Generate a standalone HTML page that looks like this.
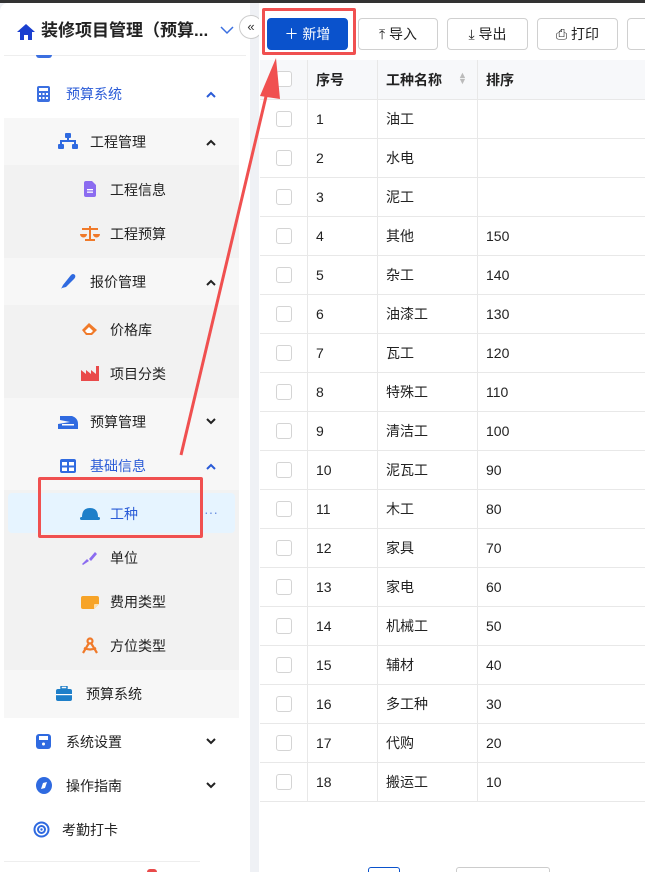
<!DOCTYPE html>
<html><head><meta charset="utf-8"><style>
*{margin:0;padding:0;box-sizing:border-box}
html,body{width:645px;height:872px;overflow:hidden}
body{background:#eff1f5;font-family:"Liberation Sans","Noto Sans CJK SC",sans-serif;font-size:14px;color:#222;position:relative}
.a{position:absolute}
.side{left:0;top:3px;width:250px;height:869px;background:#fff;border-top-left-radius:8px}
.t{position:absolute;font-size:14px;color:#222;white-space:nowrap;line-height:18px}
.chev{position:absolute}
.main{left:259px;top:3px;width:386px;height:869px;background:#fff}
.btn{position:absolute;top:18px;height:32px;border:1px solid #d0d0d0;border-radius:4px;background:#fff;font-size:14px;line-height:30px;text-align:center;color:#222}
.row{position:absolute;left:260px;width:385px;height:39px;border-bottom:1px solid #e8e8e8;font-size:14px}
.row span{position:absolute;top:0;line-height:38px}
.cb{position:absolute;left:16px;top:11px;width:16px;height:16px;border:1px solid #d4d4d4;border-radius:3px;background:#fff}
.vl{position:absolute;top:60px;height:741px;width:1px;background:#e8e8e8}
</style></head><body>
<div class="a" style="left:0;top:0;width:645px;height:3px;background:#333"></div>
<div class="a side"></div>
<svg class="a" style="left:16px;top:23px" width="20" height="18" viewBox="0 0 20 18"><path d="M10 1L1 9h3v8h4v-5h4v5h4V9h3z" fill="#1a3fcf"/></svg>
<div class="t" style="left:41px;top:22px;font-size:17px;font-weight:bold;color:#222">装修项目管理（预算...</div>
<svg class="a" style="left:220px;top:26px" width="14" height="9"><path d="M1 1L7 7 13 1" stroke="#3b6fe0" stroke-width="1.5" fill="none"/></svg>
<div class="a" style="left:239px;top:15px;width:24px;height:24px;border:1px solid #ccc;border-radius:12px;background:#fff;font-size:13px;line-height:21px;text-align:center;color:#333">«</div>
<div class="a" style="left:4px;top:55px;width:242px;height:1px;background:#eee"></div>
<div class="a" style="left:36px;top:55px;width:16px;height:3px;background:#3b6fe0;border-radius:0 0 3px 3px"></div>
<svg class="a" style="left:37px;top:86px" width="13" height="16"><rect x="0" y="0" width="13" height="16" rx="2" fill="#3b6fe0"/><rect x="2" y="2" width="9" height="3" fill="#fff"/><g fill="#fff"><rect x="2" y="7" width="2" height="2"/><rect x="5.5" y="7" width="2" height="2"/><rect x="9" y="7" width="2" height="2"/><rect x="2" y="11" width="2" height="2"/><rect x="5.5" y="11" width="2" height="2"/><rect x="9" y="11" width="2" height="2"/></g></svg>
<div class="t" style="left:66px;top:85px;color:#2a5bd7">预算系统</div>
<svg class="chev" style="left:206px;top:91px" width="10" height="7"><path d="M1 6L5 2 9 6" stroke="#2a5bd7" stroke-width="2" fill="none"/></svg>
<div class="a" style="left:4px;top:118px;width:235px;height:600px;background:#f7f7f7"></div>
<div class="a" style="left:4px;top:165px;width:235px;height:93px;background:#f2f2f2"></div>
<div class="a" style="left:4px;top:305px;width:235px;height:93px;background:#f2f2f2"></div>
<div class="a" style="left:4px;top:490px;width:235px;height:180px;background:#f2f2f2"></div>
<svg class="a" style="left:58px;top:133px" width="20" height="17"><g fill="#2f6ae0"><rect x="7" y="0" width="6" height="5" rx="1"/><rect x="9" y="5" width="2" height="3"/><rect x="2" y="7" width="16" height="2"/><rect x="2" y="8" width="2" height="3"/><rect x="16" y="8" width="2" height="3"/><rect x="0" y="11" width="6" height="5" rx="1"/><rect x="14" y="11" width="6" height="5" rx="1"/></g></svg>
<div class="t" style="left:90px;top:133px">工程管理</div>
<svg class="chev" style="left:206px;top:139px" width="10" height="7"><path d="M1 6L5 2 9 6" stroke="#222" stroke-width="2" fill="none"/></svg>
<svg class="a" style="left:84px;top:181px" width="12" height="16"><path d="M0 2Q0 0 2 0H8L12 4V14Q12 16 10 16H2Q0 16 0 14Z" fill="#8b6cf0"/><g fill="#fff"><rect x="3" y="8" width="6" height="1.3"/><rect x="3" y="10.5" width="6" height="1.3"/></g></svg>
<div class="t" style="left:110px;top:181px">工程信息</div>
<svg class="a" style="left:80px;top:225px" width="20" height="16"><g fill="#f07a2a"><rect x="9" y="1" width="2" height="13"/><rect x="2" y="3" width="16" height="2"/><path d="M0 9h7a3.5 3.5 0 0 1-7 0zM13 9h7a3.5 3.5 0 0 1-7 0z"/><rect x="5" y="14" width="10" height="2"/></g></svg>
<div class="t" style="left:110px;top:225px">工程预算</div>
<svg class="a" style="left:60px;top:273px" width="16" height="17"><path d="M2 15L1 16 3 12 11 2Q13 0 15 2 16 4 14 6L6 14Z" fill="#2f6ae0"/></svg>
<div class="t" style="left:90px;top:273px">报价管理</div>
<svg class="chev" style="left:206px;top:279px" width="10" height="7"><path d="M1 6L5 2 9 6" stroke="#222" stroke-width="2" fill="none"/></svg>
<svg class="a" style="left:81px;top:321px" width="18" height="15"><path d="M1 9L8 2 16 9 11 14H5Z" fill="#f07a2a"/><path d="M4 10L8 6 12 10 10 12H6Z" fill="#fff"/></svg>
<div class="t" style="left:110px;top:321px">价格库</div>
<svg class="a" style="left:81px;top:366px" width="18" height="15"><path d="M0 4l5 4V4l5 4V4l5 4V0h3v15H0Z" fill="#e94a4a"/></svg>
<div class="t" style="left:110px;top:365px">项目分类</div>
<svg class="a" style="left:58px;top:416px" width="20" height="13"><path d="M2 0H14Q20 2 20 8V13H0V8L12 6 2 4Z" fill="#2f6ae0"/><rect x="4" y="8" width="12" height="1.5" fill="#fff"/></svg>
<div class="t" style="left:90px;top:413px">预算管理</div>
<svg class="chev" style="left:206px;top:418px" width="10" height="7"><path d="M1 1L5 5 9 1" stroke="#222" stroke-width="2" fill="none"/></svg>
<svg class="a" style="left:60px;top:459px" width="16" height="14"><rect width="16" height="14" rx="2" fill="#2f6ae0"/><g fill="#fff"><rect x="2" y="3" width="5" height="3.5"/><rect x="9" y="3" width="5" height="3.5"/><rect x="2" y="8.5" width="5" height="3.5"/><rect x="9" y="8.5" width="5" height="3.5"/></g></svg>
<div class="t" style="left:90px;top:457px;color:#2a5bd7">基础信息</div>
<svg class="chev" style="left:206px;top:463px" width="10" height="7"><path d="M1 6L5 2 9 6" stroke="#2a5bd7" stroke-width="2" fill="none"/></svg>
<div class="a" style="left:8px;top:493px;width:227px;height:40px;background:#e6f4ff;border-radius:4px"></div>
<svg class="a" style="left:80px;top:507px" width="20" height="14"><path d="M2 10Q2 1 10 1 18 1 18 10Z" fill="#1e7fc9"/><rect x="0" y="10" width="20" height="3" rx="1.5" fill="#1e7fc9"/></svg>
<div class="t" style="left:110px;top:505px;color:#2a5bd7">工种</div>
<div class="t" style="left:204px;top:503px;color:#6a8fe0">···</div>
<svg class="a" style="left:82px;top:550px" width="16" height="16"><path d="M1 15L0 14 5 9 7 11ZM7 9L13 2 15 4 9 11Z" fill="#8b6cf0"/></svg>
<div class="t" style="left:110px;top:549px">单位</div>
<svg class="a" style="left:81px;top:596px" width="18" height="13"><path d="M0 2Q0 0 2 0H16Q18 0 18 2V8L13 13H2Q0 13 0 11Z" fill="#f7a428"/><path d="M13 13V9Q13 8 14 8H18Z" fill="#fde1b0"/></svg>
<div class="t" style="left:110px;top:593px">费用类型</div>
<svg class="a" style="left:81px;top:637px" width="18" height="17"><g stroke="#f07a2a" stroke-width="2.2" fill="none"><circle cx="9" cy="4" r="2.5"/><path d="M8 6L2 16M10 6L16 16M3 11Q9 14 15 11"/></g></svg>
<div class="t" style="left:110px;top:637px">方位类型</div>
<svg class="a" style="left:56px;top:686px" width="16" height="15"><rect x="5" y="0" width="6" height="3" rx="1" fill="none" stroke="#1e7fc9" stroke-width="1.5"/><rect x="0" y="3" width="16" height="12" rx="2" fill="#1e7fc9"/><rect x="0" y="8" width="16" height="1.2" fill="#fff"/></svg>
<div class="t" style="left:86px;top:685px">预算系统</div>
<svg class="a" style="left:36px;top:734px" width="15" height="15"><rect width="15" height="15" rx="3" fill="#2f6ae0"/><rect x="3" y="2" width="9" height="4" fill="#fff"/><circle cx="7.5" cy="10" r="1.5" fill="#fff"/></svg>
<div class="t" style="left:66px;top:733px">系统设置</div>
<svg class="chev" style="left:206px;top:738px" width="10" height="7"><path d="M1 1L5 5 9 1" stroke="#222" stroke-width="2" fill="none"/></svg>
<svg class="a" style="left:36px;top:777px" width="16" height="17"><ellipse cx="8" cy="8.5" rx="8" ry="8.5" fill="#2f6ae0"/><path d="M5 12L7 6 11 5 9 11Z" fill="#fff"/></svg>
<div class="t" style="left:66px;top:777px">操作指南</div>
<svg class="chev" style="left:206px;top:782px" width="10" height="7"><path d="M1 1L5 5 9 1" stroke="#222" stroke-width="2" fill="none"/></svg>
<svg class="a" style="left:33px;top:821px" width="17" height="17"><g fill="none" stroke="#2f6ae0" stroke-width="2"><circle cx="8.5" cy="8.5" r="7"/><circle cx="8.5" cy="8.5" r="3.5"/></g><circle cx="8.5" cy="8.5" r="1.2" fill="#2f6ae0"/></svg>
<div class="t" style="left:62px;top:821px">考勤打卡</div>
<div class="a" style="left:4px;top:861px;width:196px;height:1px;background:#eee"></div>
<div class="a" style="left:147px;top:869px;width:10px;height:3px;border-radius:5px 5px 0 0;background:#e94a4a"></div>
<div class="a main"></div>
<div class="btn" style="left:267px;width:81px;background:#0a52cc;border-color:#0a52cc;color:#fff">＋ 新增</div>
<div class="btn" style="left:358px;width:80px">⤒ 导入</div>
<div class="btn" style="left:447px;width:81px">⤓ 导出</div>
<div class="btn" style="left:537px;width:81px">⎙ 打印</div>
<div class="btn" style="left:627px;width:40px"></div>
<div class="a" style="left:260px;top:60px;width:385px;height:40px;background:#f7f8fa;border-bottom:1px solid #e8e8e8"></div>
<div class="cb" style="left:276px;top:71px;position:absolute"></div>
<div class="t" style="left:316px;top:71px;font-weight:bold">序号</div>
<div class="t" style="left:386px;top:71px;font-weight:bold">工种名称</div>
<div class="t" style="left:458px;top:72px;font-size:9px;color:#bbb;line-height:6px">▲<br>▼</div>
<div class="t" style="left:486px;top:71px;font-weight:bold">排序</div>
<div class="vl" style="left:307px"></div><div class="vl" style="left:377px"></div><div class="vl" style="left:477px"></div>
<div class="row" style="top:100px"><div class="cb"></div><span style="left:56px">1</span><span style="left:126px">油工</span></div>
<div class="row" style="top:139px"><div class="cb"></div><span style="left:56px">2</span><span style="left:126px">水电</span></div>
<div class="row" style="top:178px"><div class="cb"></div><span style="left:56px">3</span><span style="left:126px">泥工</span></div>
<div class="row" style="top:217px"><div class="cb"></div><span style="left:56px">4</span><span style="left:126px">其他</span><span style="left:226px">150</span></div>
<div class="row" style="top:256px"><div class="cb"></div><span style="left:56px">5</span><span style="left:126px">杂工</span><span style="left:226px">140</span></div>
<div class="row" style="top:295px"><div class="cb"></div><span style="left:56px">6</span><span style="left:126px">油漆工</span><span style="left:226px">130</span></div>
<div class="row" style="top:334px"><div class="cb"></div><span style="left:56px">7</span><span style="left:126px">瓦工</span><span style="left:226px">120</span></div>
<div class="row" style="top:373px"><div class="cb"></div><span style="left:56px">8</span><span style="left:126px">特殊工</span><span style="left:226px">110</span></div>
<div class="row" style="top:412px"><div class="cb"></div><span style="left:56px">9</span><span style="left:126px">清洁工</span><span style="left:226px">100</span></div>
<div class="row" style="top:451px"><div class="cb"></div><span style="left:56px">10</span><span style="left:126px">泥瓦工</span><span style="left:226px">90</span></div>
<div class="row" style="top:490px"><div class="cb"></div><span style="left:56px">11</span><span style="left:126px">木工</span><span style="left:226px">80</span></div>
<div class="row" style="top:529px"><div class="cb"></div><span style="left:56px">12</span><span style="left:126px">家具</span><span style="left:226px">70</span></div>
<div class="row" style="top:568px"><div class="cb"></div><span style="left:56px">13</span><span style="left:126px">家电</span><span style="left:226px">60</span></div>
<div class="row" style="top:607px"><div class="cb"></div><span style="left:56px">14</span><span style="left:126px">机械工</span><span style="left:226px">50</span></div>
<div class="row" style="top:646px"><div class="cb"></div><span style="left:56px">15</span><span style="left:126px">辅材</span><span style="left:226px">40</span></div>
<div class="row" style="top:685px"><div class="cb"></div><span style="left:56px">16</span><span style="left:126px">多工种</span><span style="left:226px">30</span></div>
<div class="row" style="top:724px"><div class="cb"></div><span style="left:56px">17</span><span style="left:126px">代购</span><span style="left:226px">20</span></div>
<div class="row" style="top:763px"><div class="cb"></div><span style="left:56px">18</span><span style="left:126px">搬运工</span><span style="left:226px">10</span></div>
<div class="a" style="left:368px;top:867px;width:32px;height:5px;border:1px solid #0a52cc;border-bottom:none;border-radius:3px 3px 0 0"></div>
<div class="a" style="left:456px;top:867px;width:94px;height:5px;border:1px solid #ccc;border-bottom:none;border-radius:3px 3px 0 0"></div>
<div class="a" style="left:262px;top:8px;width:94px;height:47px;border:3px solid #f05050;border-radius:2px"></div>
<div class="a" style="left:38px;top:477px;width:165px;height:61px;border:3px solid #f05050;border-radius:2px"></div>
<svg class="a" style="left:0;top:0" width="645" height="872"><line x1="181" y1="455" x2="268" y2="88" stroke="#f05050" stroke-width="3"/><path d="M276 58L260 96 280 99Z" fill="#f05050"/></svg>
</body></html>
